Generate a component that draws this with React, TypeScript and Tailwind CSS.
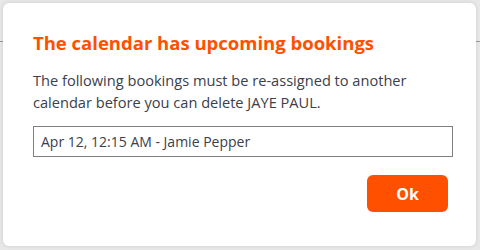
export default function App() {
  return (
    <div className="relative h-[250px] w-[480px] overflow-hidden bg-[#e8e8e8] font-['Open_Sans','Lato',sans-serif]">
      {/* page behind the overlay */}
      <div className="absolute left-0 right-0 top-[41px] h-px bg-[#9a9a9a]" />
      <div className="relative ml-[3px] mt-[3px] h-[243px] w-[473px] rounded-md bg-white pl-[30px] pr-[28px] pt-[28px] shadow-[0_0_4px_rgba(0,0,0,0.12)]">
        <h2 className="text-[18.5px] font-bold leading-[24px] text-[#ff5000]">
          The calendar has upcoming bookings
        </h2>
        <p className="mt-[14px] text-[14.6px] leading-[22px] text-[#3b404b]">
          The following bookings must be re-assigned to another calendar before you can delete JAYE PAUL.
        </p>
        <div className="mt-[13px] flex h-[31px] w-[420px] items-center border border-[#7f7f7f] px-[7px] text-[14px] text-[#3b404b]">
          Apr 12, 12:15 AM - Jamie Pepper
        </div>
        <div className="mt-[18px] flex justify-end">
          <button className="h-[37px] w-[81px] rounded-md bg-[#ff5000] text-[16px] font-bold text-white">
            Ok
          </button>
        </div>
      </div>
    </div>
  );
}
